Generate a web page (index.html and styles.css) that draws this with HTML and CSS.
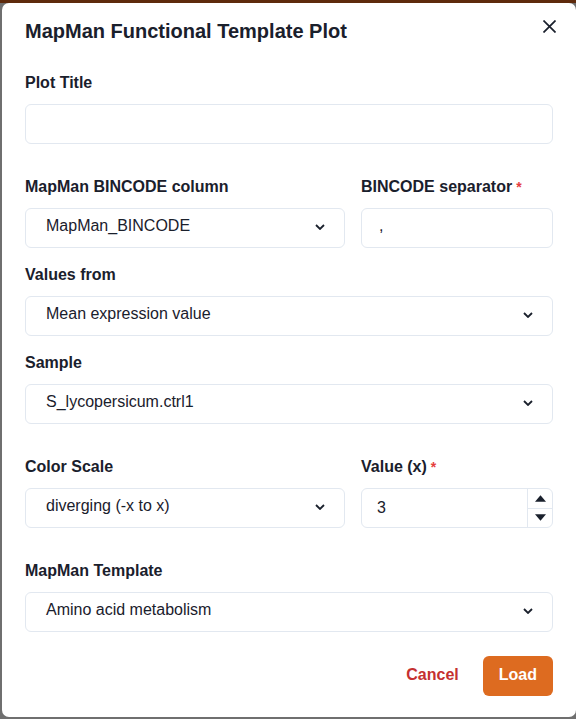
FILE: index.html
```html
<!DOCTYPE html>
<html lang="en">
<head>
<meta charset="utf-8">
<title>MapMan Functional Template Plot</title>
<link rel="stylesheet" href="styles.css">
</head>
<body>
<div class="modal" role="dialog" aria-labelledby="dlg-title">
  <button class="close" aria-label="Close">
    <svg viewBox="0 0 12 12" width="13" height="13" aria-hidden="true"><path d="M1 1 L11 11 M11 1 L1 11" stroke="#1a202c" stroke-width="1.6" fill="none" stroke-linecap="square"/></svg>
  </button>
  <header class="header">
    <h2 id="dlg-title" class="title">MapMan Functional Template Plot</h2>
  </header>
  <div class="body">
    <section class="section">
      <div class="field">
        <label class="label">Plot Title</label>
        <div class="control"></div>
      </div>
    </section>
    <section class="section">
      <div class="row">
        <div class="field">
          <label class="label">MapMan BINCODE column</label>
          <div class="control select"><span class="value">MapMan_BINCODE</span><svg class="chev" viewBox="0 0 10 6" width="10" height="6" aria-hidden="true"><path d="M1 1 L5 5 L9 1" stroke="#1a202c" stroke-width="1.8" fill="none"/></svg></div>
        </div>
        <div class="field">
          <label class="label">BINCODE separator<span class="req">*</span></label>
          <div class="control input"><span class="value">,</span></div>
        </div>
      </div>
      <div class="field">
        <label class="label">Values from</label>
        <div class="control select"><span class="value">Mean expression value</span><svg class="chev" viewBox="0 0 10 6" width="10" height="6" aria-hidden="true"><path d="M1 1 L5 5 L9 1" stroke="#1a202c" stroke-width="1.8" fill="none"/></svg></div>
      </div>
      <div class="field">
        <label class="label">Sample</label>
        <div class="control select"><span class="value">S_lycopersicum.ctrl1</span><svg class="chev" viewBox="0 0 10 6" width="10" height="6" aria-hidden="true"><path d="M1 1 L5 5 L9 1" stroke="#1a202c" stroke-width="1.8" fill="none"/></svg></div>
      </div>
    </section>
    <section class="section">
      <div class="row">
        <div class="field">
          <label class="label">Color Scale</label>
          <div class="control select"><span class="value">diverging (-x to x)</span><svg class="chev" viewBox="0 0 10 6" width="10" height="6" aria-hidden="true"><path d="M1 1 L5 5 L9 1" stroke="#1a202c" stroke-width="1.8" fill="none"/></svg></div>
        </div>
        <div class="field">
          <label class="label">Value (x)<span class="req">*</span></label>
          <div class="control number">
            <span class="value num">3</span>
            <div class="stepper">
              <div class="step"><svg viewBox="0 0 10 6" width="11" height="7" aria-hidden="true"><path d="M0 6 L5 0 L10 6 Z" fill="#1a202c"/></svg></div>
              <div class="step step-down"><svg viewBox="0 0 10 6" width="11" height="7" aria-hidden="true"><path d="M0 0 L10 0 L5 6 Z" fill="#1a202c"/></svg></div>
            </div>
          </div>
        </div>
      </div>
    </section>
    <section class="section">
      <div class="field">
        <label class="label">MapMan Template</label>
        <div class="control select"><span class="value">Amino acid metabolism</span><svg class="chev" viewBox="0 0 10 6" width="10" height="6" aria-hidden="true"><path d="M1 1 L5 5 L9 1" stroke="#1a202c" stroke-width="1.8" fill="none"/></svg></div>
      </div>
    </section>
  </div>
  <footer class="footer">
    <button class="btn btn-ghost">Cancel</button>
    <button class="btn btn-primary">Load</button>
  </footer>
</div>
</body>
</html>
```
FILE: styles.css
```css
* { box-sizing: border-box; }
html, body { margin: 0; padding: 0; }
body {
  width: 576px;
  height: 719px;
  overflow: hidden;
  font-family: "Liberation Sans", Arial, sans-serif;
  color: #1a202c;
  background: linear-gradient(#5e2a0c 0, #5e2a0c 3px, #6f6f6f 3px);
  padding-top: 3px;
  padding-left: 2px;
}
.modal {
  position: relative;
  width: 574px;
  height: 714px;
  background: #fff;
  border-radius: 7px;
  padding: 0 23px;
}
.close {
  position: absolute;
  top: 7px;
  right: 11px;
  width: 32px;
  height: 32px;
  border: 0;
  background: transparent;
  padding: 0;
  display: flex;
  align-items: center;
  justify-content: center;
}
.header { padding-top: 14px; }
.title {
  margin: 0;
  font-size: 20px;
  line-height: 28px;
  font-weight: 700;
}
.body {
  padding-top: 25px;
  display: flex;
  flex-direction: column;
  gap: 30px;
}
.section {
  display: flex;
  flex-direction: column;
  gap: 14px;
}
.row {
  display: grid;
  grid-template-columns: 5fr 3fr;
  gap: 16px;
}
.field {
  display: flex;
  flex-direction: column;
  gap: 9px;
}
.label {
  font-size: 16px;
  line-height: 24px;
  padding-top: 1px;
  font-weight: 700;
}
.req {
  color: #e53e3e;
  margin-left: 4px;
  font-size: 14px;
}
.control {
  height: 40px;
  border: 1px solid #e2e8f0;
  border-radius: 6px;
  display: flex;
  align-items: center;
  font-size: 16px;
  padding: 0 16px;
}
.value { line-height: 20px; margin-top: -4px; }
.select { padding-left: 20px; justify-content: space-between; }
.chev { margin-right: 3px; margin-top: -2px; }
.input { padding-left: 17px; }
.number { padding: 0 0 0 15px; justify-content: space-between; }
.num { margin-top: -1px; }
.stepper {
  width: 25px;
  height: 100%;
  border-left: 1px solid #e2e8f0;
  display: flex;
  flex-direction: column;
}
.step {
  flex: 1;
  display: flex;
  align-items: center;
  justify-content: center;
}
.step-down { border-top: 1px solid #e2e8f0; }
.footer {
  display: flex;
  justify-content: flex-end;
  gap: 8px;
  padding-top: 24px;
}
.btn {
  height: 40px;
  padding: 0 16px 2px;
  border: 0;
  border-radius: 6px;
  font-family: inherit;
  font-size: 16px;
  font-weight: 700;
}
.btn-ghost { background: transparent; color: #c53030; }
.btn-primary { background: #dd6b20; color: #fff; }
```
